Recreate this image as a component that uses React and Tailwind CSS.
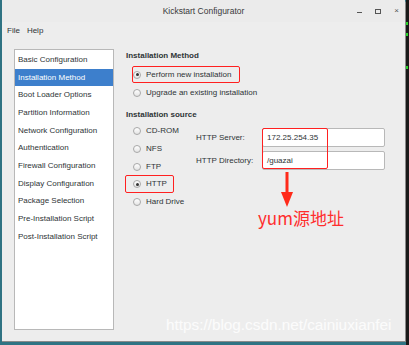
import React from "react";

const sidebarItems = [
  "Basic Configuration",
  "Installation Method",
  "Boot Loader Options",
  "Partition Information",
  "Network Configuration",
  "Authentication",
  "Firewall Configuration",
  "Display Configuration",
  "Package Selection",
  "Pre-Installation Script",
  "Post-Installation Script",
];

const sources = ["CD-ROM", "NFS", "FTP", "HTTP", "Hard Drive"];

function Radio({ checked, label }) {
  return (
    <div className="flex items-center gap-[5px] h-[17.7px]">
      <span className="w-[8px] h-[8px] rounded-full border border-[#a8a8a8] bg-gradient-to-b from-white to-[#e4e4e4] flex items-center justify-center">
        {checked && <span className="w-[3px] h-[3px] rounded-full bg-[#333]" />}
      </span>
      <span>{label}</span>
    </div>
  );
}

export default function App() {
  return (
    <div
      className="relative w-[409px] h-[345px] bg-[#2f7383] overflow-hidden text-[8px] text-[#2e3436]"
      style={{ fontFamily: '"Liberation Sans", "Noto Sans CJK SC", sans-serif' }}
    >
      {/* right edge of another window */}
      <div className="absolute right-0 top-0 w-[3px] h-full bg-[#1a1a1a]">
        <div className="mt-[22px] w-[2px] h-[3px] bg-[#2bd32b]" />
        <div className="mt-[8px] w-[2px] h-[3px] bg-[#2bd32b]" />
        <div className="mt-[30px] w-[2px] h-[3px] bg-[#2bd32b]" />
      </div>

      <div className="ml-[2px] w-[404px] h-[342px] bg-[#ededed] rounded-t-[4px] border-r border-b border-[#8a8a8a] flex flex-col">
        {/* title bar */}
        <div className="relative h-[22px] flex items-center justify-center bg-[#ebebeb] text-[8.5px] text-[#3a3a3a]">
          Kickstart Configurator
          <div className="absolute right-[6px] top-0 h-full flex items-center gap-[13px] text-[#555]">
            <span className="w-[5px] h-[1px] bg-[#555] mt-[3px]" />
            <span className="w-[6px] h-[5px] border border-[#555]" />
            <span className="text-[8px] leading-none">×</span>
          </div>
        </div>

        {/* menu bar */}
        <div className="h-[18px] flex items-center gap-[7px] px-[5px]">
          <span>File</span>
          <span>Help</span>
        </div>

        {/* body */}
        <div className="flex gap-[12px] pl-[12px] pt-[9px]">
          <div className="w-[100px] h-[281px] bg-white border border-[#b8b8b8] pt-[1px]">
            {sidebarItems.map((item, i) => (
              <div
                key={item}
                className={
                  "h-[17.7px] flex items-center pl-[3px] " +
                  (i === 1 ? "bg-[#3d7fcc] text-white" : "")
                }
              >
                {item}
              </div>
            ))}
          </div>

          <div className="flex flex-col">
            <div className="font-bold mt-[1px]">Installation Method</div>
            <div className="pl-[7px] mt-[4px]">
              <Radio checked label="Perform new installation" />
              <Radio label="Upgrade an existing installation" />
            </div>
            <div className="font-bold mt-[8px]">Installation source</div>
            <div className="flex mt-[1px]">
              <div className="pl-[7px] w-[70px]">
                {sources.map((s) => (
                  <Radio key={s} checked={s === "HTTP"} label={s} />
                ))}
              </div>
              <div className="flex flex-col gap-[4px] mt-[6px]">
                <div className="flex items-center">
                  <span className="w-[66px]">HTTP Server:</span>
                  <div className="w-[123px] h-[19px] bg-white border border-[#b8b8b8] rounded-[2px] flex items-center pl-[4px]">
                    172.25.254.35
                  </div>
                </div>
                <div className="flex items-center">
                  <span className="w-[66px]">HTTP Directory:</span>
                  <div className="w-[123px] h-[19px] bg-white border border-[#b8b8b8] rounded-[2px] flex items-center pl-[4px]">
                    /guazai
                  </div>
                </div>
              </div>
            </div>
          </div>
        </div>
      </div>

      {/* annotations */}
      <div className="absolute left-[132px] top-[66px] w-[108px] h-[17px] border border-[#ff2020] rounded-[2px]" />
      <div className="absolute left-[125px] top-[175px] w-[49px] h-[18px] border border-[#ff2020] rounded-[2px]" />
      <div className="absolute left-[262px] top-[128px] w-[66px] h-[41px] border border-[#ff2020] rounded-[2px]" />
      <svg className="absolute left-[281px] top-[172px]" width="12" height="36" viewBox="0 0 12 36">
        <rect x="4.5" y="0" width="3" height="24" fill="#ff2a1a" />
        <polygon points="0,20 12,20 6,35" fill="#ff2a1a" />
      </svg>
      <div className="absolute left-[258px] top-[207px] text-[17px] leading-[22px] text-[#ff2d2d]" style={{ fontFamily: '"Noto Sans CJK SC", sans-serif' }}>
        yum源地址
      </div>
      <div className="absolute left-[166px] top-[315px] text-[15.3px] leading-[20px] text-white/80" style={{ fontFamily: '"Liberation Sans", sans-serif' }}>
        https://blog.csdn.net/cainiuxianfei
      </div>
    </div>
  );
}
